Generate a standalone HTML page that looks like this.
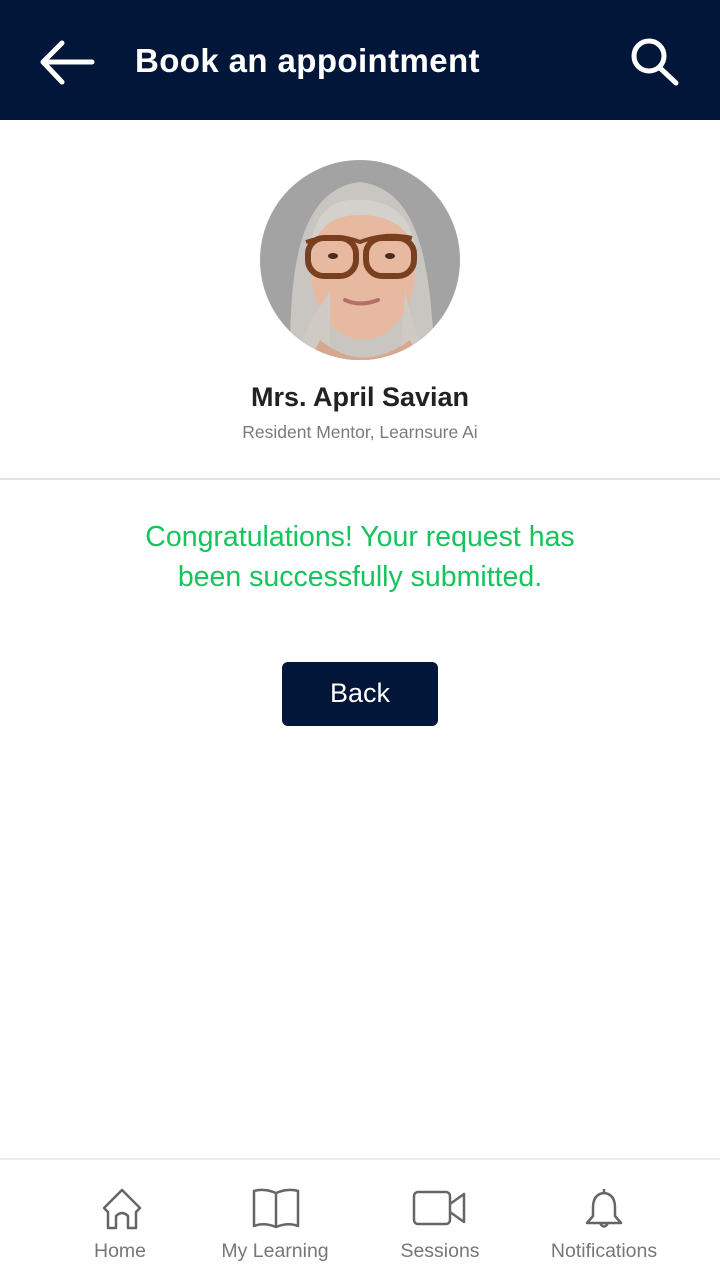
<!DOCTYPE html>
<html><head><meta charset="utf-8"><style>
*{margin:0;padding:0;box-sizing:border-box}
body{width:720px;height:1280px;background:#fff;font-family:"Liberation Sans",sans-serif;position:relative;overflow:hidden}
.hdr{position:absolute;left:0;top:0;width:720px;height:120px;background:#011638}
.title{position:absolute;left:135px;top:42px;color:#fff;font-weight:bold;font-size:33px;letter-spacing:0.4px}
.name{position:absolute;top:382px;width:720px;text-align:center;font-size:27px;font-weight:bold;color:#222}
.sub{position:absolute;top:422px;width:720px;text-align:center;font-size:17.5px;color:#7a7a7a}
.hr{position:absolute;top:478px;left:0;width:720px;height:2px;background:#e2e2e2}
.msg{position:absolute;top:517px;width:720px;text-align:center;font-size:28.5px;line-height:40px;color:#16c45e}
.btn{position:absolute;left:282px;top:662px;width:156px;height:64px;background:#011638;border-radius:6px;color:#fff;font-size:27px;text-align:center;line-height:62px}
.nav{position:absolute;top:1158px;left:0;width:720px;height:122px;border-top:2px solid #ececec}
.lbl{position:absolute;top:1240px;font-size:19.5px;color:#777;text-align:center;width:170px}
</style></head><body>
<div class="hdr">
<svg style="position:absolute;left:38px;top:38px" width="58" height="50" viewBox="0 0 58 50"><path d="M54 24H6M24 5L5 24L24 44" fill="none" stroke="#fff" stroke-width="5" stroke-linecap="round" stroke-linejoin="round"/></svg>
<div class="title">Book an appointment</div>
<svg style="position:absolute;left:628px;top:36px" width="56" height="50" viewBox="0 0 56 50"><circle cx="21" cy="20" r="15" fill="none" stroke="#fff" stroke-width="5"/><path d="M32 32L48 47" stroke="#fff" stroke-width="5" stroke-linecap="round"/></svg>
</div>
<svg style="position:absolute;left:260px;top:160px" width="200" height="200" viewBox="0 0 200 200">
<defs><clipPath id="c"><circle cx="100" cy="100" r="100"/></clipPath></defs>
<g clip-path="url(#c)">
<rect width="200" height="200" fill="#a3a3a3"/>
<path d="M30 200 C30 120 35 30 100 22 C165 30 170 120 175 200Z" fill="#c9c6c2"/>
<ellipse cx="103" cy="110" rx="52" ry="70" fill="#e6b9a0"/>
<path d="M50 90 C55 45 80 38 100 40 C130 40 150 55 155 85 C140 60 120 55 100 55 C75 55 60 65 50 90Z" fill="#d4d0cc"/>
<path d="M40 200 C45 160 60 150 70 130 L70 200Z" fill="#cfcac4"/>
<path d="M145 130 C150 160 160 180 165 200 L140 200Z" fill="#cfcac4"/>
<path d="M60 180 Q103 215 150 180 L160 200 L50 200Z" fill="#d7a890"/>
<path d="M46 82 Q75 72 100 82 Q125 72 152 78" fill="none" stroke="#7a3f1f" stroke-width="4"/>
<rect x="48" y="78" width="48" height="38" rx="16" fill="none" stroke="#7a3f1f" stroke-width="6"/>
<rect x="106" y="78" width="48" height="38" rx="16" fill="none" stroke="#7a3f1f" stroke-width="6"/>
<ellipse cx="73" cy="96" rx="5" ry="3" fill="#4a2b1f"/><ellipse cx="130" cy="96" rx="5" ry="3" fill="#4a2b1f"/>
<path d="M85 140 Q100 147 118 140" fill="none" stroke="#b56f6a" stroke-width="4" stroke-linecap="round"/>
</g></svg>
<div class="name">Mrs. April Savian</div>
<div class="sub">Resident Mentor, Learnsure Ai</div>
<div class="hr"></div>
<div class="msg">Congratulations! Your request has<br>been successfully submitted.</div>
<div class="btn">Back</div>
<div class="nav"></div>
<svg style="position:absolute;left:100px;top:1186px" width="44" height="44" viewBox="0 0 44 44"><path d="M4 22L22 4L40 22L36 26V42H28V30Q22 24 16 30V42H8V26Z" fill="none" stroke="#666" stroke-width="2.5" stroke-linejoin="round"/></svg>
<svg style="position:absolute;left:252px;top:1188px" width="48" height="42" viewBox="0 0 48 42"><path d="M2 3Q12 0 24 5Q36 0 46 3V38Q36 34 24 39Q12 34 2 38Z M24 5V39" fill="none" stroke="#666" stroke-width="2.5" stroke-linejoin="round"/></svg>
<svg style="position:absolute;left:412px;top:1190px" width="54" height="36" viewBox="0 0 54 36"><rect x="2" y="2" width="36" height="32" rx="4" fill="none" stroke="#666" stroke-width="2.5"/><path d="M38 14L52 4V32L38 22" fill="none" stroke="#666" stroke-width="2.5" stroke-linejoin="round"/></svg>
<svg style="position:absolute;left:584px;top:1186px" width="40" height="46" viewBox="0 0 40 46"><path d="M20 3V7M20 7Q9 8 9 22V30L3 37H37L31 30V22Q31 8 20 7Z M16 37Q20 44 24 37" fill="none" stroke="#666" stroke-width="2.5" stroke-linejoin="round"/></svg>
<div class="lbl" style="left:35px">Home</div>
<div class="lbl" style="left:190px">My Learning</div>
<div class="lbl" style="left:355px">Sessions</div>
<div class="lbl" style="left:519px">Notifications</div>
</body></html>
